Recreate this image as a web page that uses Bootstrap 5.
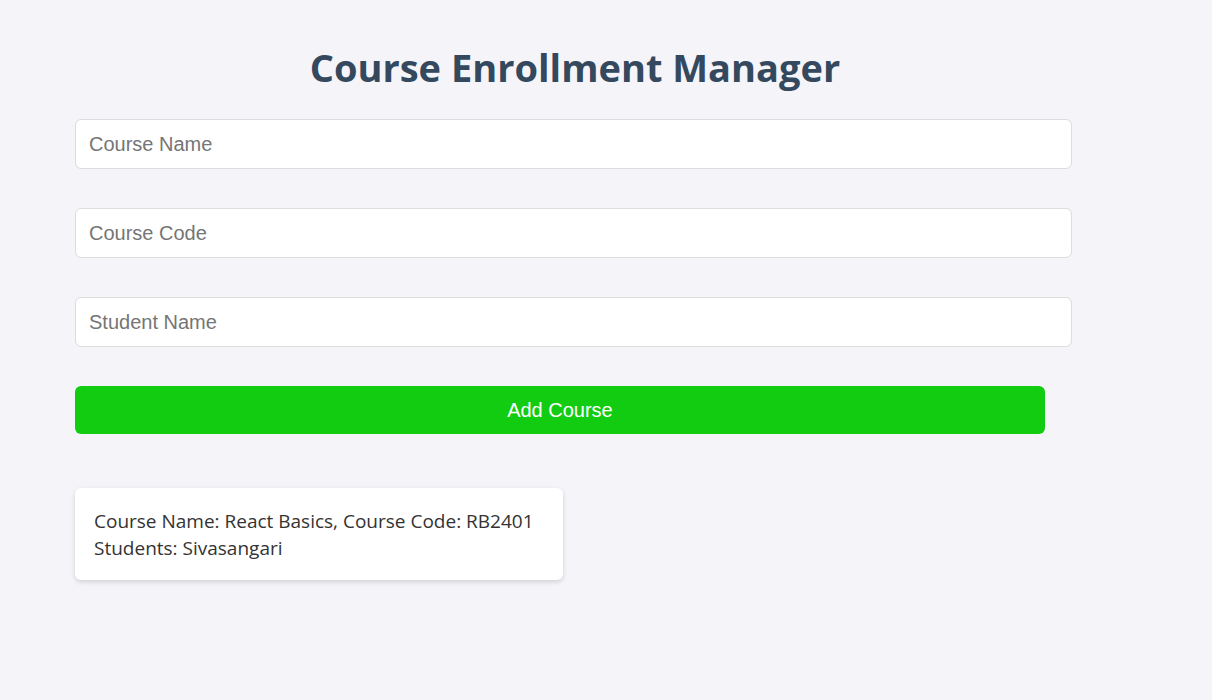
<!DOCTYPE html>
<html lang="en">
<head>
<meta charset="utf-8">
<meta name="viewport" content="width=device-width, initial-scale=1">
<title>Course Enrollment Manager</title>
<link href="https://cdn.jsdelivr.net/npm/bootstrap@5.3.0/dist/css/bootstrap.min.css" rel="stylesheet">
<style>
  body { background: #f4f4f9; color: #333; font-family: "Open Sans", "Noto Sans", sans-serif; }
  .manager { width: 82.5%; margin-left: 75px; padding: 41px 0 40px; }
  .page-title { color: #34495e; font-family: "Open Sans", "Noto Sans", sans-serif; font-size: 38px; line-height: 52px; font-weight: 700; margin-bottom: 26px; }
  .field { width: 99.7%; height: 50px; padding: 0 13px; font-family: "Liberation Sans", sans-serif; font-size: 20px; border: 1px solid #ddd; border-radius: 6px; }
  .field::placeholder { color: #757575; opacity: 1; }
  .fields { gap: 39px; }
  .add-btn { width: 97%; height: 48px; background: #12cc12; color: #fff; border: 0; border-radius: 6px; padding: 0; font-family: "Liberation Sans", sans-serif; font-size: 20px; }
  .add-btn:hover { background: #0fb80f; color: #fff; }
  .course-list { padding-top: 54px; }
  .course-item { width: 48.8%; padding: 20px 19px 18px; border-radius: 6px; background: #fff; box-shadow: 0 2px 5px rgba(0,0,0,.15); font-size: 19px; line-height: 27px; }
</style>
</head>
<body>
<main class="manager">
  <h1 class="page-title text-center">Course Enrollment Manager</h1>
  <form class="fields d-flex flex-column">
    <input class="field form-control" type="text" placeholder="Course Name" aria-label="Course Name">
    <input class="field form-control" type="text" placeholder="Course Code" aria-label="Course Code">
    <input class="field form-control" type="text" placeholder="Student Name" aria-label="Student Name">
    <button class="add-btn btn" type="button">Add Course</button>
  </form>
  <ul class="course-list list-unstyled mb-0">
    <li class="course-item">
      <div>Course Name: React Basics, Course Code: RB2401</div>
      <div>Students: Sivasangari</div>
    </li>
  </ul>
</main>
<script src="https://cdn.jsdelivr.net/npm/bootstrap@5.3.0/dist/js/bootstrap.bundle.min.js"></script>
</body>
</html>
